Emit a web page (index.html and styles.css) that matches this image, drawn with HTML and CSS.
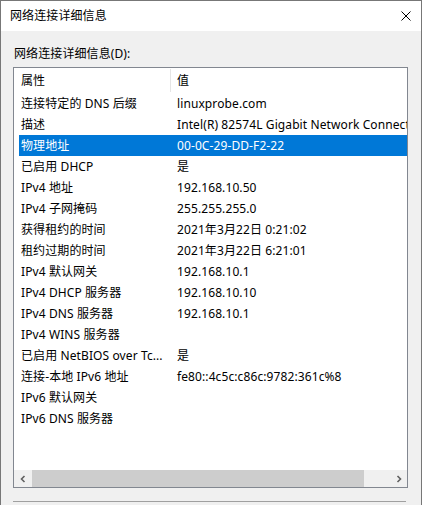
FILE: index.html
```html
<!DOCTYPE html>
<html lang="zh-CN">
<head>
<meta charset="utf-8">
<title>网络连接详细信息</title>
<link rel="stylesheet" href="styles.css">
</head>
<body>
<div class="window">
  <div class="titlebar">
    <span class="title">网络连接详细信息</span>
    <svg class="close" width="10" height="10" viewBox="0 0 10 10"><path d="M0.5 0.5 L9.5 9.5 M9.5 0.5 L0.5 9.5" stroke="#000" stroke-width="1" fill="none"/></svg>
  </div>
  <div class="content">
    <div class="label">网络连接详细信息(D):</div>
    <div class="listbox">
      <div class="header">
        <div class="h1">属性</div>
        <div class="h2">值</div>
      </div>
      <div class="rows">
        <div class="row"><div class="c1">连接特定的 DNS 后缀</div><div class="c2">linuxprobe.com</div></div>
        <div class="row"><div class="c1">描述</div><div class="c2">Intel(R) 82574L Gigabit Network Connection</div></div>
        <div class="row sel"><div class="c1">物理地址</div><div class="c2">00-0C-29-DD-F2-22</div></div>
        <div class="row"><div class="c1">已启用 DHCP</div><div class="c2">是</div></div>
        <div class="row"><div class="c1">IPv4 地址</div><div class="c2">192.168.10.50</div></div>
        <div class="row"><div class="c1">IPv4 子网掩码</div><div class="c2">255.255.255.0</div></div>
        <div class="row"><div class="c1">获得租约的时间</div><div class="c2">2021年3月22日 0:21:02</div></div>
        <div class="row"><div class="c1">租约过期的时间</div><div class="c2">2021年3月22日 6:21:01</div></div>
        <div class="row"><div class="c1">IPv4 默认网关</div><div class="c2">192.168.10.1</div></div>
        <div class="row"><div class="c1">IPv4 DHCP 服务器</div><div class="c2">192.168.10.10</div></div>
        <div class="row"><div class="c1">IPv4 DNS 服务器</div><div class="c2">192.168.10.1</div></div>
        <div class="row"><div class="c1">IPv4 WINS 服务器</div><div class="c2"></div></div>
        <div class="row"><div class="c1">已启用 NetBIOS over Tc...</div><div class="c2">是</div></div>
        <div class="row"><div class="c1">连接-本地 IPv6 地址</div><div class="c2">fe80::4c5c:c86c:9782:361c%8</div></div>
        <div class="row"><div class="c1">IPv6 默认网关</div><div class="c2"></div></div>
        <div class="row"><div class="c1">IPv6 DNS 服务器</div><div class="c2"></div></div>
      </div>
      <div class="spacer"></div>
      <div class="hscroll">
        <div class="sbtn"><svg width="8" height="8" viewBox="0 0 8 8"><path d="M5.5 1 L2.5 4 L5.5 7" stroke="#606060" stroke-width="1.6" fill="none"/></svg></div>
        <div class="thumb"></div>
        <div class="track"></div>
        <div class="sbtn"><svg width="8" height="8" viewBox="0 0 8 8"><path d="M2.5 1 L5.5 4 L2.5 7" stroke="#606060" stroke-width="1.6" fill="none"/></svg></div>
      </div>
    </div>
    <div class="nextbox"></div>
  </div>
</div>
</body>
</html>
```
FILE: styles.css
```css
html, body {
  margin: 0;
  padding: 0;
  overflow: hidden;
  background: #f0f0f0;
}
body {
  font-family: "Noto Sans", "Noto Sans CJK SC", sans-serif;
  font-size: 12px;
  letter-spacing: 0.1px;
  color: #000;
}
.window {
  width: 420px;
  height: 520px;
  border: 1px solid #777;
  border-bottom: none;
  background: #f0f0f0;
}
.titlebar {
  height: 30px;
  background: #fff;
  display: flex;
  align-items: center;
  justify-content: space-between;
  padding: 0 9px 0 9px;
}
.title {
  line-height: 16px;
}
.close {
  display: block;
  margin-right: 1px;
}
.content {
  padding: 0 13px 0 12px;
}
.label {
  margin-top: 15px;
  line-height: 16px;
  padding-left: 1px;
}
.listbox {
  margin-top: 5px;
  height: 419px;
  border: 1px solid #828790;
  background: #fff;
  display: flex;
  flex-direction: column;
  overflow: hidden;
}
.header {
  height: 25px;
  display: flex;
  align-items: center;
  flex-shrink: 0;
}
.h1 {
  width: 157px;
  box-sizing: border-box;
  height: 23px;
  line-height: 23px;
  padding-left: 7px;
  border-right: 1px solid #e5e5e5;
}
.h2 {
  padding-left: 6px;
  line-height: 23px;
}
.rows {
  flex-shrink: 0;
}
.row {
  height: 21px;
  line-height: 21px;
  display: flex;
  margin-left: 5px;
  white-space: nowrap;
}
.c1 {
  width: 152px;
  flex-shrink: 0;
  box-sizing: border-box;
  padding-left: 2px;
  overflow: hidden;
}
.c2 {
  padding-left: 6px;
  white-space: nowrap;
}
.row.sel {
  background: #0078d7;
  color: #fff;
}
.spacer {
  flex: 1;
}
.hscroll {
  height: 17px;
  display: flex;
  background: #f0f0f0;
  flex-shrink: 0;
}
.sbtn {
  width: 17px;
  height: 17px;
  display: flex;
  align-items: center;
  justify-content: center;
  flex-shrink: 0;
}
.thumb {
  width: 332px;
  margin-left: 1px;
  background: #cdcdcd;
  flex-shrink: 0;
}
.track {
  flex: 1;
}
.nextbox {
  margin-top: 13px;
  height: 20px;
  border-top: 1px solid #a0a0a0;
  margin-left: 0;
  width: 393px;
}
```
